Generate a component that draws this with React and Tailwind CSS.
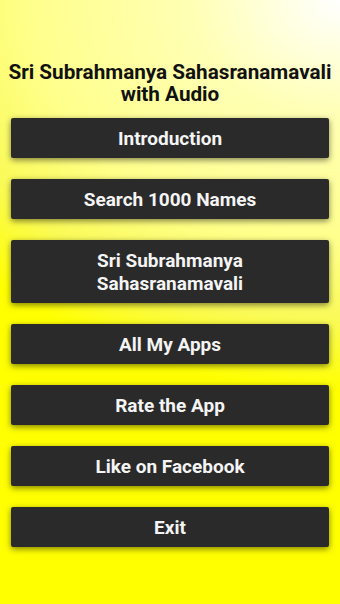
const ITEMS = [
  'Introduction',
  'Search 1000 Names',
  'Sri Subrahmanya Sahasranamavali',
  'All My Apps',
  'Rate the App',
  'Like on Facebook',
  'Exit',
];

function MenuButton({ label, tall }) {
  return (
    <button
      className={`w-full rounded-[2px] bg-[#2a2a2a] text-[#f4f4f4] font-bold text-[19px] leading-[23px] shadow-[0_2px_6px_rgba(0,0,0,0.5)] ${
        tall ? 'h-[63px] px-[60px]' : 'h-[40px]'
      }`}
    >
      {label}
    </button>
  );
}

export default function App() {
  return (
    <div className="min-h-[604px] w-full bg-[#ffff00] bg-[radial-gradient(ellipse_500px_390px_at_100%_0%,#ffffff_0%,#ffffb4_30%,#ffff8c_62%,#fafa58_82%,#ffff00_100%)] font-['Roboto','Liberation_Sans',sans-serif]">
      <div className="pt-[61px] px-[11px]">
        <h1 className="text-center text-[20.7px] leading-[22px] font-bold text-[#111111] -mx-[8px]">
          Sri Subrahmanya Sahasranamavali
          <br />
          with Audio
        </h1>
        <div className="mt-[13px] flex flex-col gap-[21px]">
          {ITEMS.map((label, i) => (
            <MenuButton key={label} label={label} tall={i === 2} />
          ))}
        </div>
      </div>
    </div>
  );
}
